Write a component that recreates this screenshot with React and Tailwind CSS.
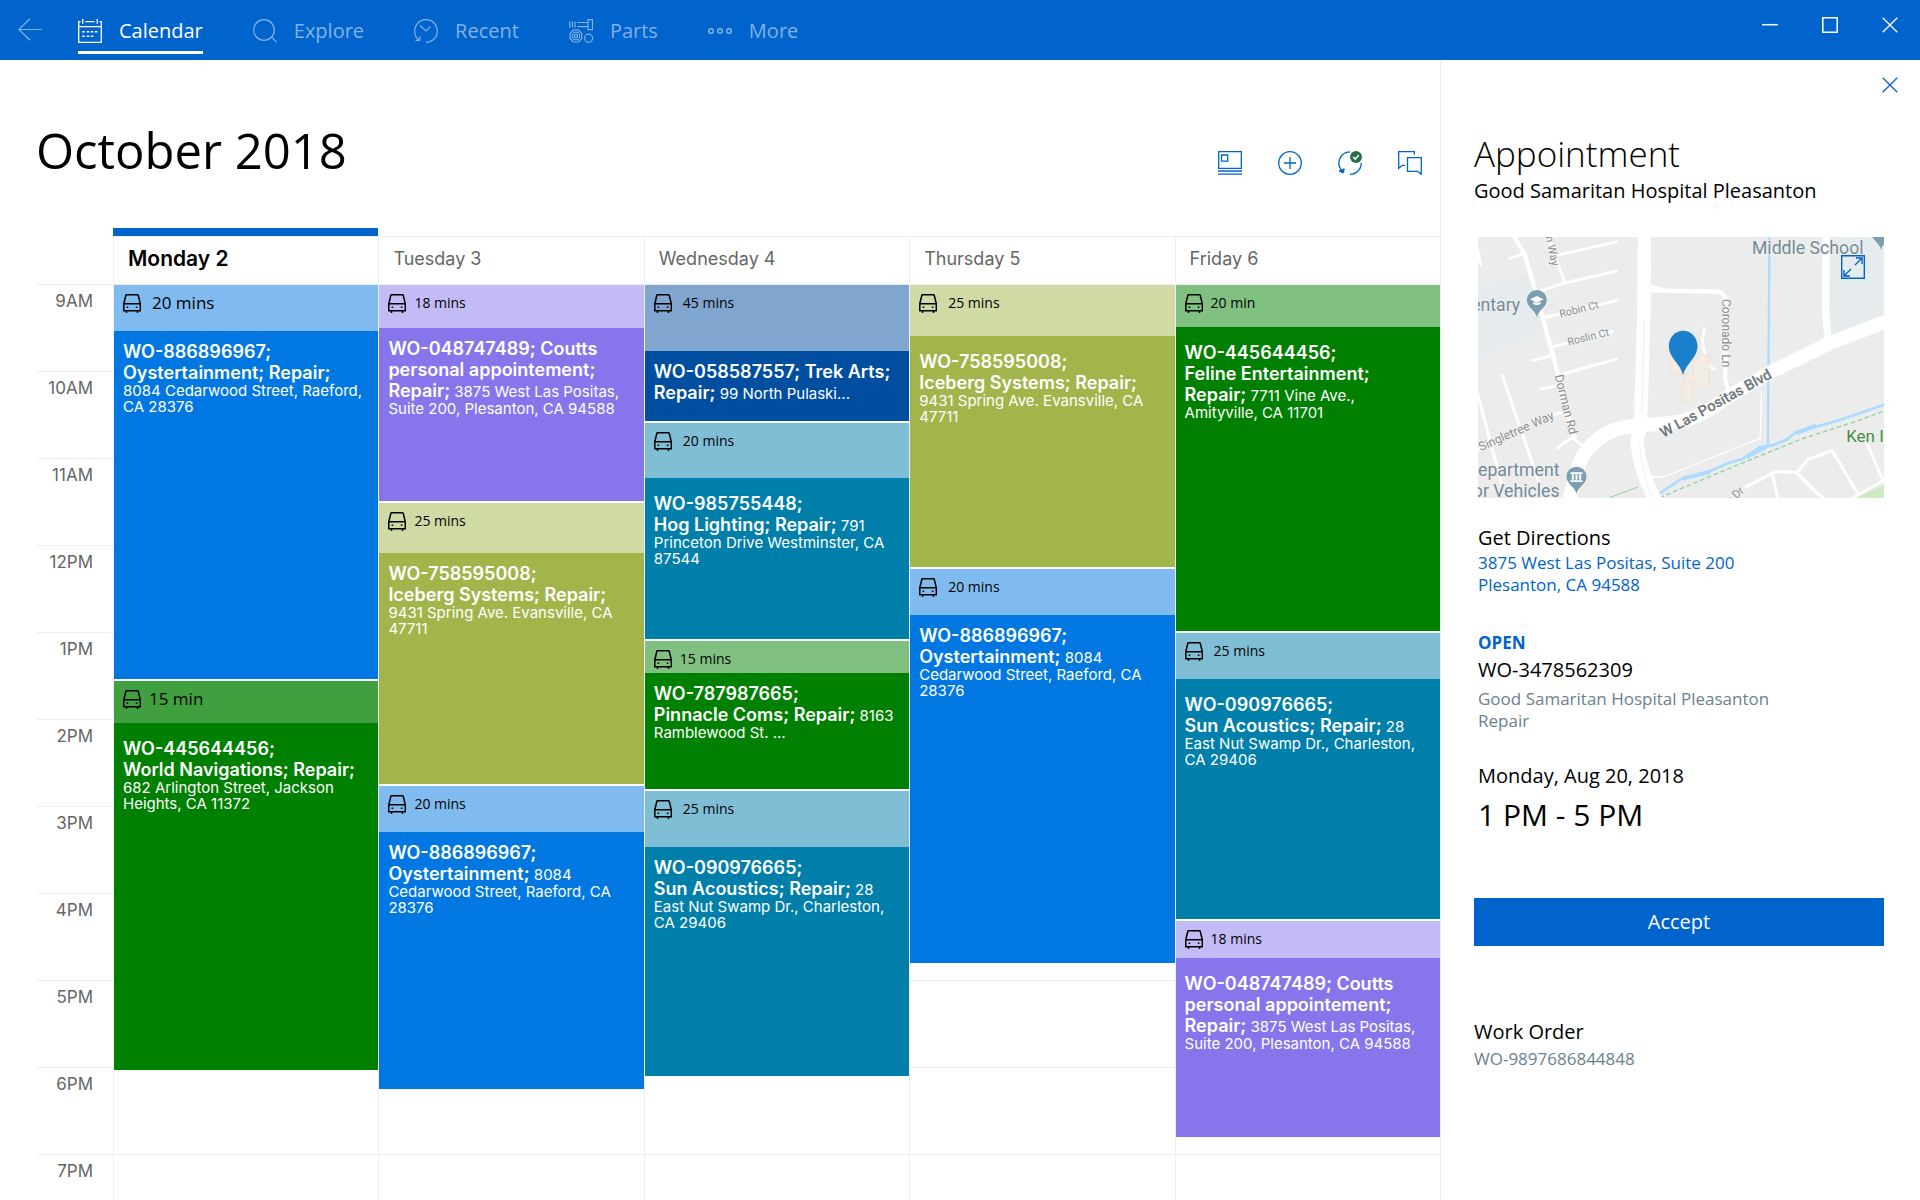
import React, { useState } from 'react';
import clsx from 'clsx';

const HOURS = ['9AM', '10AM', '11AM', '12PM', '1PM', '2PM', '3PM', '4PM', '5PM', '6PM', '7PM'];

// Body colour and travel colour of each kind of job
const COLORS = {
  blue: { travel: 'bg-[#80bbf0]', body: 'bg-[#0178e1]' },
  green: { travel: 'bg-[#80c080]', body: 'bg-[#008000]' },
  darkGreen: { travel: 'bg-[#40a040]', body: 'bg-[#008000]' },
  purple: { travel: 'bg-[#c3bbf5]', body: 'bg-[#8776eb]' },
  olive: { travel: 'bg-[#d0daa5]', body: 'bg-[#a2b54b]' },
  navy: { travel: 'bg-[#80a6d0]', body: 'bg-[#004e9f]' },
  teal: { travel: 'bg-[#80bed6]', body: 'bg-[#007fab]' },
};

// travel and work are block heights in pixels (87px = one hour)
const DAYS = [
  {
    name: 'Monday 2',
    current: true,
    jobs: [
      { color: 'blue', mins: '20 mins', big: true, wide: true, travel: 46, work: 348, title: ['WO-886896967;', 'Oystertainment; Repair;'], address: '8084 Cedarwood Street, Raeford, CA 28376' },
      { color: 'darkGreen', mins: '15 min', big: true, roomy: true, travel: 42, work: 347, title: ['WO-445644456;', 'World Navigations; Repair;'], address: '682 Arlington Street, Jackson Heights, CA 11372' },
    ],
  },
  {
    name: 'Tuesday 3',
    jobs: [
      { color: 'purple', mins: '18 mins', travel: 43, work: 173, title: ['WO-048747489; Coutts', 'personal appointement;', 'Repair;'], address: '3875 West Las Positas, Suite 200, Plesanton, CA 94588' },
      { color: 'olive', mins: '25 mins', travel: 50, work: 231, title: ['WO-758595008;', 'Iceberg Systems; Repair;'], address: '9431 Spring Ave. Evansville, CA 47711' },
      { color: 'blue', mins: '20 mins', travel: 46, work: 257, title: ['WO-886896967;', 'Oystertainment;'], address: '8084 Cedarwood Street, Raeford, CA 28376' },
    ],
  },
  {
    name: 'Wednesday 4',
    jobs: [
      { color: 'navy', mins: '45 mins', wide: true, travel: 66, work: 70, title: ['WO-058587557; Trek Arts;', 'Repair;'], address: '99 North Pulaski...' },
      { color: 'teal', mins: '20 mins', wide: true, roomy: true, travel: 55, work: 161, title: ['WO-985755448;', 'Hog Lighting; Repair;'], address: '791 Princeton Drive Westminster, CA 87544' },
      { color: 'green', mins: '15 mins', travel: 32, work: 116, title: ['WO-787987665;', 'Pinnacle Coms; Repair;'], address: '8163 Ramblewood St. ...' },
      { color: 'teal', mins: '25 mins', wide: true, travel: 56, work: 229, title: ['WO-090976665;', 'Sun Acoustics; Repair;'], address: '28 East Nut Swamp Dr., Charleston, CA 29406' },
    ],
  },
  {
    name: 'Thursday 5',
    jobs: [
      { color: 'olive', mins: '25 mins', wide: true, roomy: true, travel: 51, work: 231, title: ['WO-758595008;', 'Iceberg Systems; Repair;'], address: '9431 Spring Ave. Evansville, CA 47711' },
      { color: 'blue', mins: '20 mins', wide: true, travel: 46, work: 348, title: ['WO-886896967;', 'Oystertainment;'], address: '8084 Cedarwood Street, Raeford, CA 28376' },
    ],
  },
  {
    name: 'Friday 6',
    jobs: [
      { color: 'green', mins: '20 min', roomy: true, travel: 42, work: 304, title: ['WO-445644456;', 'Feline Entertainment;', 'Repair;'], address: '7711 Vine Ave., Amityville, CA 11701' },
      { color: 'teal', mins: '25 mins', wide: true, roomy: true, travel: 46, work: 240, title: ['WO-090976665;', 'Sun Acoustics; Repair;'], address: '28 East Nut Swamp Dr., Charleston, CA 29406' },
      { color: 'purple', mins: '18 mins', roomy: true, travel: 37, work: 179, title: ['WO-048747489; Coutts', 'personal appointement;', 'Repair;'], address: '3875 West Las Positas, Suite 200, Plesanton, CA 94588' },
    ],
  },
];

function Icon({ children, className = 'size-6', viewBox = '0 0 24 24', strokeWidth = 1.2 }) {
  return (
    <svg viewBox={viewBox} className={clsx('shrink-0', className)} fill="none" stroke="currentColor" strokeWidth={strokeWidth} aria-hidden="true">
      {children}
    </svg>
  );
}

const CalendarIcon = () => (
  <Icon strokeWidth={1.3}>
    <path d="M2.5 2.7H.7v20.6h22.6V2.7h-1.8M7.5 2.7h9M.7 7.7h22.6M4.7 0v4.8M19.3 0v4.8" />
    <path d="M4.2 12.8h2.6M8.7 12.8h2.6M12.8 12.8h2.6M16.8 12.8h2.6M4.2 17.3h2.6M8.7 17.3h2.6M12.8 17.3h2.6" strokeWidth="1.5" />
  </Icon>
);

const SearchIcon = () => (
  <Icon>
    <circle cx="11" cy="11" r="10.3" />
    <path d="M18.5 18l5.2 5.2" />
  </Icon>
);

const RecentIcon = () => (
  <Icon>
    <path d="M5 21C2 19 .7 15.5.7 12A11.3 11.3 0 1 1 12 23.3" />
    <path d="M6 6.5l6 5.5 4.5-4.500M1.5 21.3h4.300v-4" />
  </Icon>
);

const PartsIcon = () => (
  <Icon>
    <path d="M.8 2.5v6M3.4 2.5v6M6 2.5v6M8.5 3.5h10.500M8.5 7.7h10.500M19 3.500V.7h4.500v10H19V3.500" />
    <path d="M4.4 11h5l3.4 3.4v5L9.400 23h-5L1 19.400v-5z" />
    <circle cx="6.9" cy="17" r="3.8" />
    <circle cx="6.9" cy="17" r="1.6" />
    <circle cx="19.6" cy="19.2" r="4" />
  </Icon>
);

const MoreIcon = () => (
  <Icon strokeWidth={1.5}>
    <circle cx="3" cy="12" r="2.3" />
    <circle cx="12" cy="12" r="2.3" />
    <circle cx="21" cy="12" r="2.3" />
  </Icon>
);

const CloseIcon = () => (
  <Icon className="size-4" viewBox="0 0 16 16" strokeWidth={1.3}>
    <path d="M.7.7l14.600 14.600M15.300.7L.7 15.300" />
  </Icon>
);

const CarIcon = () => (
  <Icon className="h-[19px] w-[18px]" viewBox="0 0 18 19" strokeWidth={1.5}>
    <path d="M3.600.8h10.800q.7 0 .9.700l2 8.200v7H.8v-7l2-8.200q.1-.7.800-.7zM.8 9.800h16.400M3.500 16.800V19M14.500 16.800V19" />
    <path d="M3.600 13.300h1.600M12.800 13.300h1.600" />
  </Icon>
);

const NAV = [
  { label: 'Calendar', icon: CalendarIcon },
  { label: 'Explore', icon: SearchIcon },
  { label: 'Recent', icon: RecentIcon },
  { label: 'Parts', icon: PartsIcon },
  { label: 'More', icon: MoreIcon },
];

function TopBar({ active, onSelect }) {
  return (
    <header className="flex h-[60px] shrink-0 items-start bg-[#0064cc] pr-[22px] text-white">
      <button aria-label="Back" className="mt-[18px] ml-[18px] text-[#80b2e6]">
        <Icon>
          <path d="M24 11.500H.8M12 .8L.8 11.500 12 22.200" />
        </Icon>
      </button>
      <nav className="ml-9 flex gap-[50px]">
        {NAV.map(({ label, icon: NavIcon }) => (
          <button
            key={label}
            onClick={() => onSelect(label)}
            className={clsx(
              'flex h-[54px] items-center gap-[17px] border-b-[3px] pt-2.5 text-[20px] leading-6',
              active === label ? 'border-white text-white' : 'border-transparent text-[#80b2e6]'
            )}
          >
            <NavIcon />
            {label}
          </button>
        ))}
      </nav>
      <div className="mt-[17px] ml-auto flex gap-11">
        <button aria-label="Minimize">
          <Icon className="size-4" viewBox="0 0 16 16" strokeWidth={1.5}>
            <path d="M0 7.700h16" />
          </Icon>
        </button>
        <button aria-label="Maximize">
          <Icon className="size-4" viewBox="0 0 16 16" strokeWidth={1.5}>
            <path d="M.8.8h14.400v14.400H.8z" />
          </Icon>
        </button>
        <button aria-label="Close window">
          <CloseIcon />
        </button>
      </div>
    </header>
  );
}

function Toolbar() {
  return (
    <div className="mb-[7px] flex gap-9 text-[#0064cc]">
      <button aria-label="Agenda view">
        <Icon strokeWidth={1.3}>
          <path d="M.7.7h22.600v16.600H.7zM3.500 4h6.200v6.200H3.500zM0 20h24M0 23.200h24" />
        </Icon>
      </button>
      <button aria-label="New appointment">
        <Icon strokeWidth={1.3}>
          <circle cx="12" cy="12" r="11.3" />
          <path d="M12 6v12M6 12h12" />
        </Icon>
      </button>
      <button aria-label="Sync status">
        <Icon strokeWidth={1.3}>
          <path d="M12 .8A11.300 11.300 0 0 0 4.500 20.300M23.300 12A11.300 11.300 0 0 1 12 23.300" />
          <path d="M1 20l5.200-2.200-.6 4.200z" fill="currentColor" strokeWidth="1" />
          <circle cx="18" cy="6" r="6" fill="#2b6e4a" stroke="none" />
          <path d="M15.200 6l2 2 3.600-3.700" stroke="#fff" strokeWidth="1.6" />
        </Icon>
      </button>
      <button aria-label="Messages">
        <Icon strokeWidth={1.3}>
          <path d="M7 14.300H4.500L.7 17.300V.7h15.600v3" />
          <path d="M9.500 6.700h13.800v16.400l-3.700-2.800H9.500z" />
        </Icon>
      </button>
    </div>
  );
}

function Job({ job }) {
  const { travel, body } = COLORS[job.color];
  return (
    <article>
      <div
        className={clsx('flex items-start pt-[9px] pl-[9px] text-black', travel, job.wide ? 'gap-[11px]' : 'gap-2')}
        style={{ height: job.travel }}
      >
        <CarIcon />
        <span className={clsx('leading-[17px]', job.big ? 'text-[17px]' : 'text-[14px]')}>{job.mins}</span>
      </div>
      <p
        className={clsx(
          "overflow-hidden pr-2.5 pl-[9px] font-['Inter',sans-serif] text-[15px] leading-4 text-white",
          body,
          job.roomy ? 'pt-[15px]' : 'pt-2.5'
        )}
        style={{ height: job.work }}
      >
        {job.title.map((line, i) => (
          <React.Fragment key={line}>
            {i > 0 && <br />}
            <b className="text-[18px] leading-[21px] font-semibold">{line}</b>
          </React.Fragment>
        ))}{' '}
        {job.address}
      </p>
    </article>
  );
}

function Calendar() {
  return (
    <section className="flex min-w-0 flex-1 flex-col overflow-hidden">
      <div className="flex items-end justify-between pt-[58px] pr-[18px] pb-[46px] pl-9">
        <h1 className="text-[49px] leading-[64px]">October 2018</h1>
        <Toolbar />
      </div>

      <div className="grid shrink-0 grid-cols-[113px_repeat(5,minmax(0,1fr))] font-['Inter',sans-serif]">
        <span />
        {DAYS.map((day) => (
          <div key={day.name}>
            <div className={clsx('h-2', day.current && 'bg-[#0064cc]')} />
            <h2
              className={clsx(
                'h-12 border-t border-l border-[#efefef] pl-3.5 leading-[43px]',
                day.current ? 'text-[21px] font-semibold text-black' : 'text-[18px] text-[#666]'
              )}
            >
              {day.name}
            </h2>
          </div>
        ))}
      </div>

      {/* hour lines and job columns share one grid cell */}
      <div className="grid">
        <div className="pl-[37px] [grid-area:1/1]">
          {HOURS.map((hour) => (
            <div key={hour} className="h-[87px] border-t border-[#efefef]">
              <div className="w-14 pt-1.5 text-right font-['Inter',sans-serif] text-[17px] leading-[21px] text-[#666]">{hour}</div>
            </div>
          ))}
        </div>
        <div className="grid grid-cols-[113px_repeat(5,minmax(0,1fr))] pt-px [grid-area:1/1]">
          <span />
          {DAYS.map((day) => (
            <div key={day.name} className="flex flex-col gap-0.5 border-l border-[#efefef]">
              {day.jobs.map((job) => (
                <Job key={job.title[0]} job={job} />
              ))}
            </div>
          ))}
        </div>
      </div>
    </section>
  );
}

function PlacePin({ x, y, children }) {
  return (
    <g transform={`translate(${x} ${y})`}>
      <path d="M0 52C-4 30-30 22-30 0a30 30 0 0 1 60 0C30 22 4 30 0 52z" fill="#7b9eb0" />
      <g fill="#fff">{children}</g>
    </g>
  );
}

function Map() {
  return (
    <div className="relative ml-1 h-[261px] overflow-hidden">
      <svg viewBox="54 51 1221 783" preserveAspectRatio="xMidYMid slice" className="h-full w-full font-['Roboto',sans-serif]" role="img" aria-label="Map of the appointment">
        <rect x="54" y="51" width="1221" height="783" fill="#ececec" />
        <path d="M54 195l160-30 38 170-198 85zM1110 51h165v245l-165 50z" fill="#e6ebee" />
        <path d="M1190 833l85-40v40z" fill="#cdebc0" />

        {/* small streets */}
        <g fill="none" stroke="#fff" strokeLinejoin="round" strokeLinecap="round" strokeWidth="9">
          <path d="M150 116l45-16M54 90l10 45M268 51l30 90 20 50M300 104l170-38M245 212l73-24 152-34M258 292l212-50M282 380l178-46M220 422l56-15M308 462l162-44M245 506l48-8M128 466l110 320M54 520l74 280M230 598l75-20M293 684l45-32 32 26M60 690l50-30" />
          <path d="M165 51l30 50 35 120 60 220 34 140 22 70" strokeWidth="13" />
          <path d="M578 212l200 3q22 6 22 40l-3 225 12 40" strokeWidth="13" />
          <path d="M578 200l60 14M735 325l-6 40 8 40 14 36 14 6" strokeWidth="8" />
          <path d="M906 520l-4 135-290 116h-36" strokeWidth="4" />
          <path d="M860 800l90-45 60 2 60 60 40 30M940 768l14 65M1016 754l30-36 72-26 78 130M1275 780l-90 50M1222 670l48 110" />
        </g>
        {/* stream */}
        <g fill="none" stroke="#abdbff" strokeWidth="7" strokeLinejoin="round">
          <path d="M930 51l-5 628" />
          <path d="M600 820l70-46 80-20 60-26 40-12 50-34 40-6 40-16 30-24 60-16 70-20 135-46" strokeWidth="8" />
          <path d="M670 776l80-20M860 712l60-32M1010 640l60-24" strokeWidth="12" />
        </g>
        <path d="M600 833l200-84 220-90 160-52 95-34" fill="none" stroke="#8fd39a" strokeWidth="4" strokeDasharray="14 8" />
        <path d="M450 833l86-32" stroke="#8fd39a" strokeWidth="3" />
        {/* main roads */}
        <g fill="none" stroke="#fff">
          <path d="M555 51l-2 230-10 340-10 40q2 80 56 180" strokeWidth="40" />
          <path d="M1290 300l-180 70-180 88-130 76q-80 60-140 70c-90 14-160 10-190 24q-80 30-110 100l-30 110" strokeWidth="42" />
          <path d="M1100 51l-2 220 8 90" strokeWidth="22" />
          <path d="M540 670q6 90 38 163M555 300l-8 280" stroke="#f0f0f0" strokeWidth="3" />
        </g>
        {/* hospital building */}
        <path d="M632 425h30v34l40 8v-50h12v-12h34v92h-34v-12h-16v58h-30v-60h10v-20h-46z" fill="#f4ede6" stroke="#f3dfce" strokeWidth="3" />

        <g fill="#8a8f93" stroke="#f4f4f4" strokeWidth="5" paintOrder="stroke" fontSize="34">
          <text x="303" y="293" transform="rotate(-14 303 293)" fontSize="32">Robin Ct</text>
          <text x="327" y="377" transform="rotate(-14 327 377)" fontSize="32">Roslin Ct</text>
          <text x="258" y="50" transform="rotate(78 258 50)">n Way</text>
          <text x="285" y="467" transform="rotate(76 285 467)" fontSize="37">Dorman Rd</text>
          <text x="787" y="237" transform="rotate(90 787 237)" fontSize="36">Coronado Ln</text>
          <text x="64" y="694" transform="rotate(-24 64 694)" fontSize="37">Singletree Way</text>
          <text x="812" y="854" transform="rotate(-42 812 854)">y Dr</text>
          <text x="612" y="654" transform="rotate(-29 612 654)" fontSize="44" fontWeight="500" fill="#6b747a">W Las Positas Blvd</text>
        </g>
        <g fill="#738b97" stroke="#f0f0f0" strokeWidth="5" paintOrder="stroke" fontSize="53" textAnchor="end">
          <text x="1212" y="103">Middle School</text>
          <text x="182" y="272">entary</text>
          <text x="300" y="769">epartment</text>
          <text x="300" y="830">or Vehicles</text>
          <text x="1160" y="667" fill="#3e8e41" textAnchor="start" fontSize="51">Ken I</text>
        </g>

        <PlacePin x={232} y={240}>
          <path d="M-20-2L0-12 20-2 0 8zM-11 5v7Q0 18 11 12V5L0 10z" />
        </PlacePin>
        <PlacePin x={351} y={770}>
          <path d="M-18-13h36v6h-36zM-18 11h36v5h-36zM-14-6h6v15h-6zM-3-6h6v15h-6zM8-6h6v15H8z" />
        </PlacePin>
        <PlacePin x={1265} y={38} />
        <path d="M671 466c-8-36-43-52-43-88 0-26 19-46 43-46s43 20 43 46c0 36-35 52-43 88z" fill="#1b80cb" />
      </svg>
      <button aria-label="Expand map" className="absolute top-[18px] right-[19px] text-[#0064cc]">
        <Icon strokeWidth={1.4}>
          <path d="M.7.7h22.600v22.600H.7zM14 10l7-7M15 3h6v6M10 14l-7 7M3 15v6h6" />
        </Icon>
      </button>
    </div>
  );
}

function AppointmentPanel() {
  return (
    <aside className="w-[480px] shrink-0 border-l border-[#efefef] pr-9 pl-[33px]">
      <div className="-mr-3.5 flex justify-end pt-[17px]">
        <button aria-label="Close panel" className="text-[#0064cc]">
          <CloseIcon />
        </button>
      </div>
      <h2 className="mt-[41px] text-[35px] leading-10 font-light">Appointment</h2>
      <p className="mt-[3px] text-[20px] leading-7">Good Samaritan Hospital Pleasanton</p>

      <div className="mt-8">
        <Map />
      </div>

      <div className="pl-1">
        <h3 className="mt-[26px] text-[20px] leading-7">Get Directions</h3>
        <a href="#directions" className="block text-[17px] leading-[22px] text-[#0064cc]">
          3875 West Las Positas, Suite 200
          <br />
          Plesanton, CA 94588
        </a>

        <p className="mt-9 text-[17px] leading-[22px] font-bold text-[#0064cc]">OPEN</p>
        <p className="mt-0.5 text-[20px] leading-7">WO-3478562309</p>
        <p className="mt-1 text-[17px] leading-[22px] text-[#6b8190]">
          Good Samaritan Hospital Pleasanton
          <br />
          Repair
        </p>

        <p className="mt-[30px] text-[20px] leading-7">Monday, Aug 20, 2018</p>
        <p className="mt-[5px] text-[30px] leading-10">1 PM - 5 PM</p>
      </div>

      <button className="mt-[63px] block h-12 w-full bg-[#0064cc] text-[20px] leading-7 text-white">Accept</button>

      <h3 className="mt-[72px] text-[20px] leading-7">Work Order</h3>
      <p className="mt-0.5 text-[17px] leading-[22px] text-[#6b8190]">WO-9897686844848</p>
    </aside>
  );
}

export default function App() {
  const [active, setActive] = useState('Calendar');

  return (
    <div className="flex h-screen flex-col overflow-hidden bg-white font-['Open_Sans',sans-serif] text-black">
      <TopBar active={active} onSelect={setActive} />
      <main className="flex min-h-0 flex-1">
        <Calendar />
        <AppointmentPanel />
      </main>
    </div>
  );
}
